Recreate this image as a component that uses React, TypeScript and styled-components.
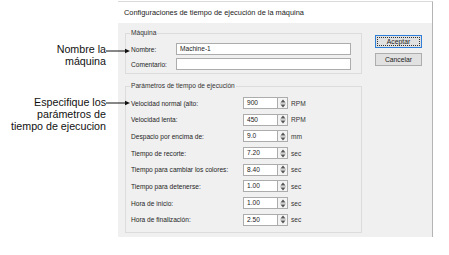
import React from 'react';
import styled, { createGlobalStyle } from 'styled-components';

const GlobalStyle = createGlobalStyle`
  html, body {
    margin: 0;
    padding: 0;
    background: #ffffff;
  }
  body {
    font-family: "Liberation Sans", Arial, sans-serif;
  }
`;

const Page = styled.div`
  width: 449px;
  height: 255px;
  display: flex;
  align-items: flex-start;
  padding-top: 1px;
  box-sizing: border-box;
  overflow: hidden;
`;

const Notes = styled.div`
  width: 118px;
  flex-shrink: 0;
  display: flex;
  flex-direction: column;
  position: relative;
  z-index: 2;
`;

const Note = styled.div<{ $top: number }>`
  position: relative;
  margin-top: ${(p) => p.$top}px;
  padding-right: 12px;
  text-align: right;
  font-size: 10.7px;
  line-height: 12px;
  color: #111;
`;

const ArrowWrap = styled.svg<{ $y: number }>`
  position: absolute;
  left: 106px;
  top: ${(p) => p.$y - 3}px;
`;

const Dialog = styled.div`
  width: 315px;
  flex-shrink: 0;
  border-top: 1px solid #dadada;
  border-right: 1px solid #b4b4b4;
  box-sizing: border-box;
  font-size: 6.6px;
  color: #1e1e1e;
`;

const TitleBar = styled.div`
  height: 21px;
  line-height: 21px;
  padding-left: 6px;
  background: #ffffff;
  font-size: 7.4px;
  color: #1a1a1a;
`;

const Body = styled.div`
  background: #f0f0f0;
  padding: 6px 10px 4px 7px;
  display: flex;
  gap: 13px;
`;

const Groups = styled.div`
  width: 237px;
  display: flex;
  flex-direction: column;
  gap: 8px;
`;

const Group = styled.fieldset<{ $pt: number; $pb: number }>`
  margin: 0;
  min-width: 0;
  border: 1px solid #dcdcdc;
  padding: ${(p) => p.$pt}px 10px ${(p) => p.$pb}px 5px;
  display: flex;
  flex-direction: column;
`;

const Legend = styled.legend`
  padding: 0 1px;
  margin-left: -1px;
  height: 8px;
  line-height: 8px;
  font-size: 6.6px;
  color: #333;
`;

const FieldRow = styled.div`
  display: flex;
  align-items: center;
  height: 12px;
  & + & {
    margin-top: 3px;
  }
`;

const Label = styled.span<{ $w: number }>`
  width: ${(p) => p.$w}px;
  flex-shrink: 0;
  white-space: nowrap;
`;

const TextBox = styled.div<{ $w?: number }>`
  height: 12px;
  box-sizing: border-box;
  ${(p) => (p.$w ? `width: ${p.$w}px;` : 'flex: 1;')}
  background: #fff;
  border: 1px solid #acacac;
  padding-left: 3px;
  line-height: 10px;
  font-size: 6.6px;
  color: #222;
`;

const ParamGrid = styled.div`
  display: grid;
  grid-template-columns: 112px 35px 10px auto;
  grid-auto-rows: 12px;
  row-gap: 4.7px;
  align-items: center;
`;

const Spinner = styled.div`
  height: 12px;
  box-sizing: border-box;
  border: 1px solid #acacac;
  border-left: none;
  background: #f4f4f4;
  display: flex;
  align-items: center;
  justify-content: center;
`;

const Unit = styled.span`
  padding-left: 3px;
  color: #333;
`;

const Buttons = styled.div`
  margin-top: 6px;
  width: 47px;
  display: flex;
  flex-direction: column;
  gap: 5px;
`;

const Button = styled.div<{ $default?: boolean }>`
  height: 13px;
  box-sizing: border-box;
  border: 1px solid ${(p) => (p.$default ? '#2f7fd8' : '#adadad')};
  background: #e1e1e1;
  padding: 1px;
  font-size: 6.8px;
  color: #222;
`;

const ButtonFace = styled.div<{ $focus?: boolean }>`
  height: 100%;
  box-sizing: border-box;
  border: 1px dotted ${(p) => (p.$focus ? '#333' : 'transparent')};
  display: flex;
  align-items: center;
  justify-content: center;
`;

const Arrow: React.FC<{ y: number }> = ({ y }) => (
  <ArrowWrap $y={y} width="26" height="6" viewBox="0 0 26 6">
    <line x1="0" y1="3" x2="20" y2="3" stroke="#111" strokeWidth="1" />
    <polygon points="19,0.8 24,3 19,5.2" fill="#111" />
  </ArrowWrap>
);

const SpinArrows = () => (
  <svg width="6" height="9" viewBox="0 0 6 9">
    <polygon points="3,0.5 5.5,3.5 0.5,3.5" fill="#555" />
    <line x1="0" y1="4.5" x2="6" y2="4.5" stroke="#c8c8c8" strokeWidth="0.8" />
    <polygon points="0.5,5.5 5.5,5.5 3,8.5" fill="#555" />
  </svg>
);

const params = [
  { label: 'Velocidad normal (alto:', value: '900', unit: 'RPM' },
  { label: 'Velocidad lenta:', value: '450', unit: 'RPM' },
  { label: 'Despacio por encima de:', value: '9.0', unit: 'mm' },
  { label: 'Tiempo de recorte:', value: '7.20', unit: 'sec' },
  { label: 'Tiempo para cambiar los colores:', value: '8.40', unit: 'sec' },
  { label: 'Tiempo para detenerse:', value: '1.00', unit: 'sec' },
  { label: 'Hora de inicio:', value: '1.00', unit: 'sec' },
  { label: 'Hora de finalización:', value: '2.50', unit: 'sec' },
];

export default function App() {
  return (
    <>
      <GlobalStyle />
      <Page>
        <Notes>
          <Note $top={42}>
            Nombre la
            <br />
            máquina
            <Arrow y={8} />
          </Note>
          <Note $top={29}>
            Especifique los
            <br />
            parámetros de
            <br />
            tiempo de ejecucion
            <Arrow y={7} />
          </Note>
        </Notes>
        <Dialog>
          <TitleBar>Configuraciones de tiempo de ejecución de la máquina</TitleBar>
          <Body>
            <Groups>
              <Group $pt={6} $pb={3}>
                <Legend>Máquina</Legend>
                <FieldRow>
                  <Label $w={45}>Nombre:</Label>
                  <TextBox>Machine-1</TextBox>
                </FieldRow>
                <FieldRow>
                  <Label $w={45}>Comentario:</Label>
                  <TextBox />
                </FieldRow>
              </Group>
              <Group $pt={7} $pb={6}>
                <Legend>Parámetros de tiempo de ejecución</Legend>
                <ParamGrid>
                  {params.map((p) => (
                    <React.Fragment key={p.label}>
                      <Label $w={112}>{p.label}</Label>
                      <TextBox $w={35}>{p.value}</TextBox>
                      <Spinner>
                        <SpinArrows />
                      </Spinner>
                      <Unit>{p.unit}</Unit>
                    </React.Fragment>
                  ))}
                </ParamGrid>
              </Group>
            </Groups>
            <Buttons>
              <Button $default>
                <ButtonFace $focus>Aceptar</ButtonFace>
              </Button>
              <Button>
                <ButtonFace>Cancelar</ButtonFace>
              </Button>
            </Buttons>
          </Body>
        </Dialog>
      </Page>
    </>
  );
}
